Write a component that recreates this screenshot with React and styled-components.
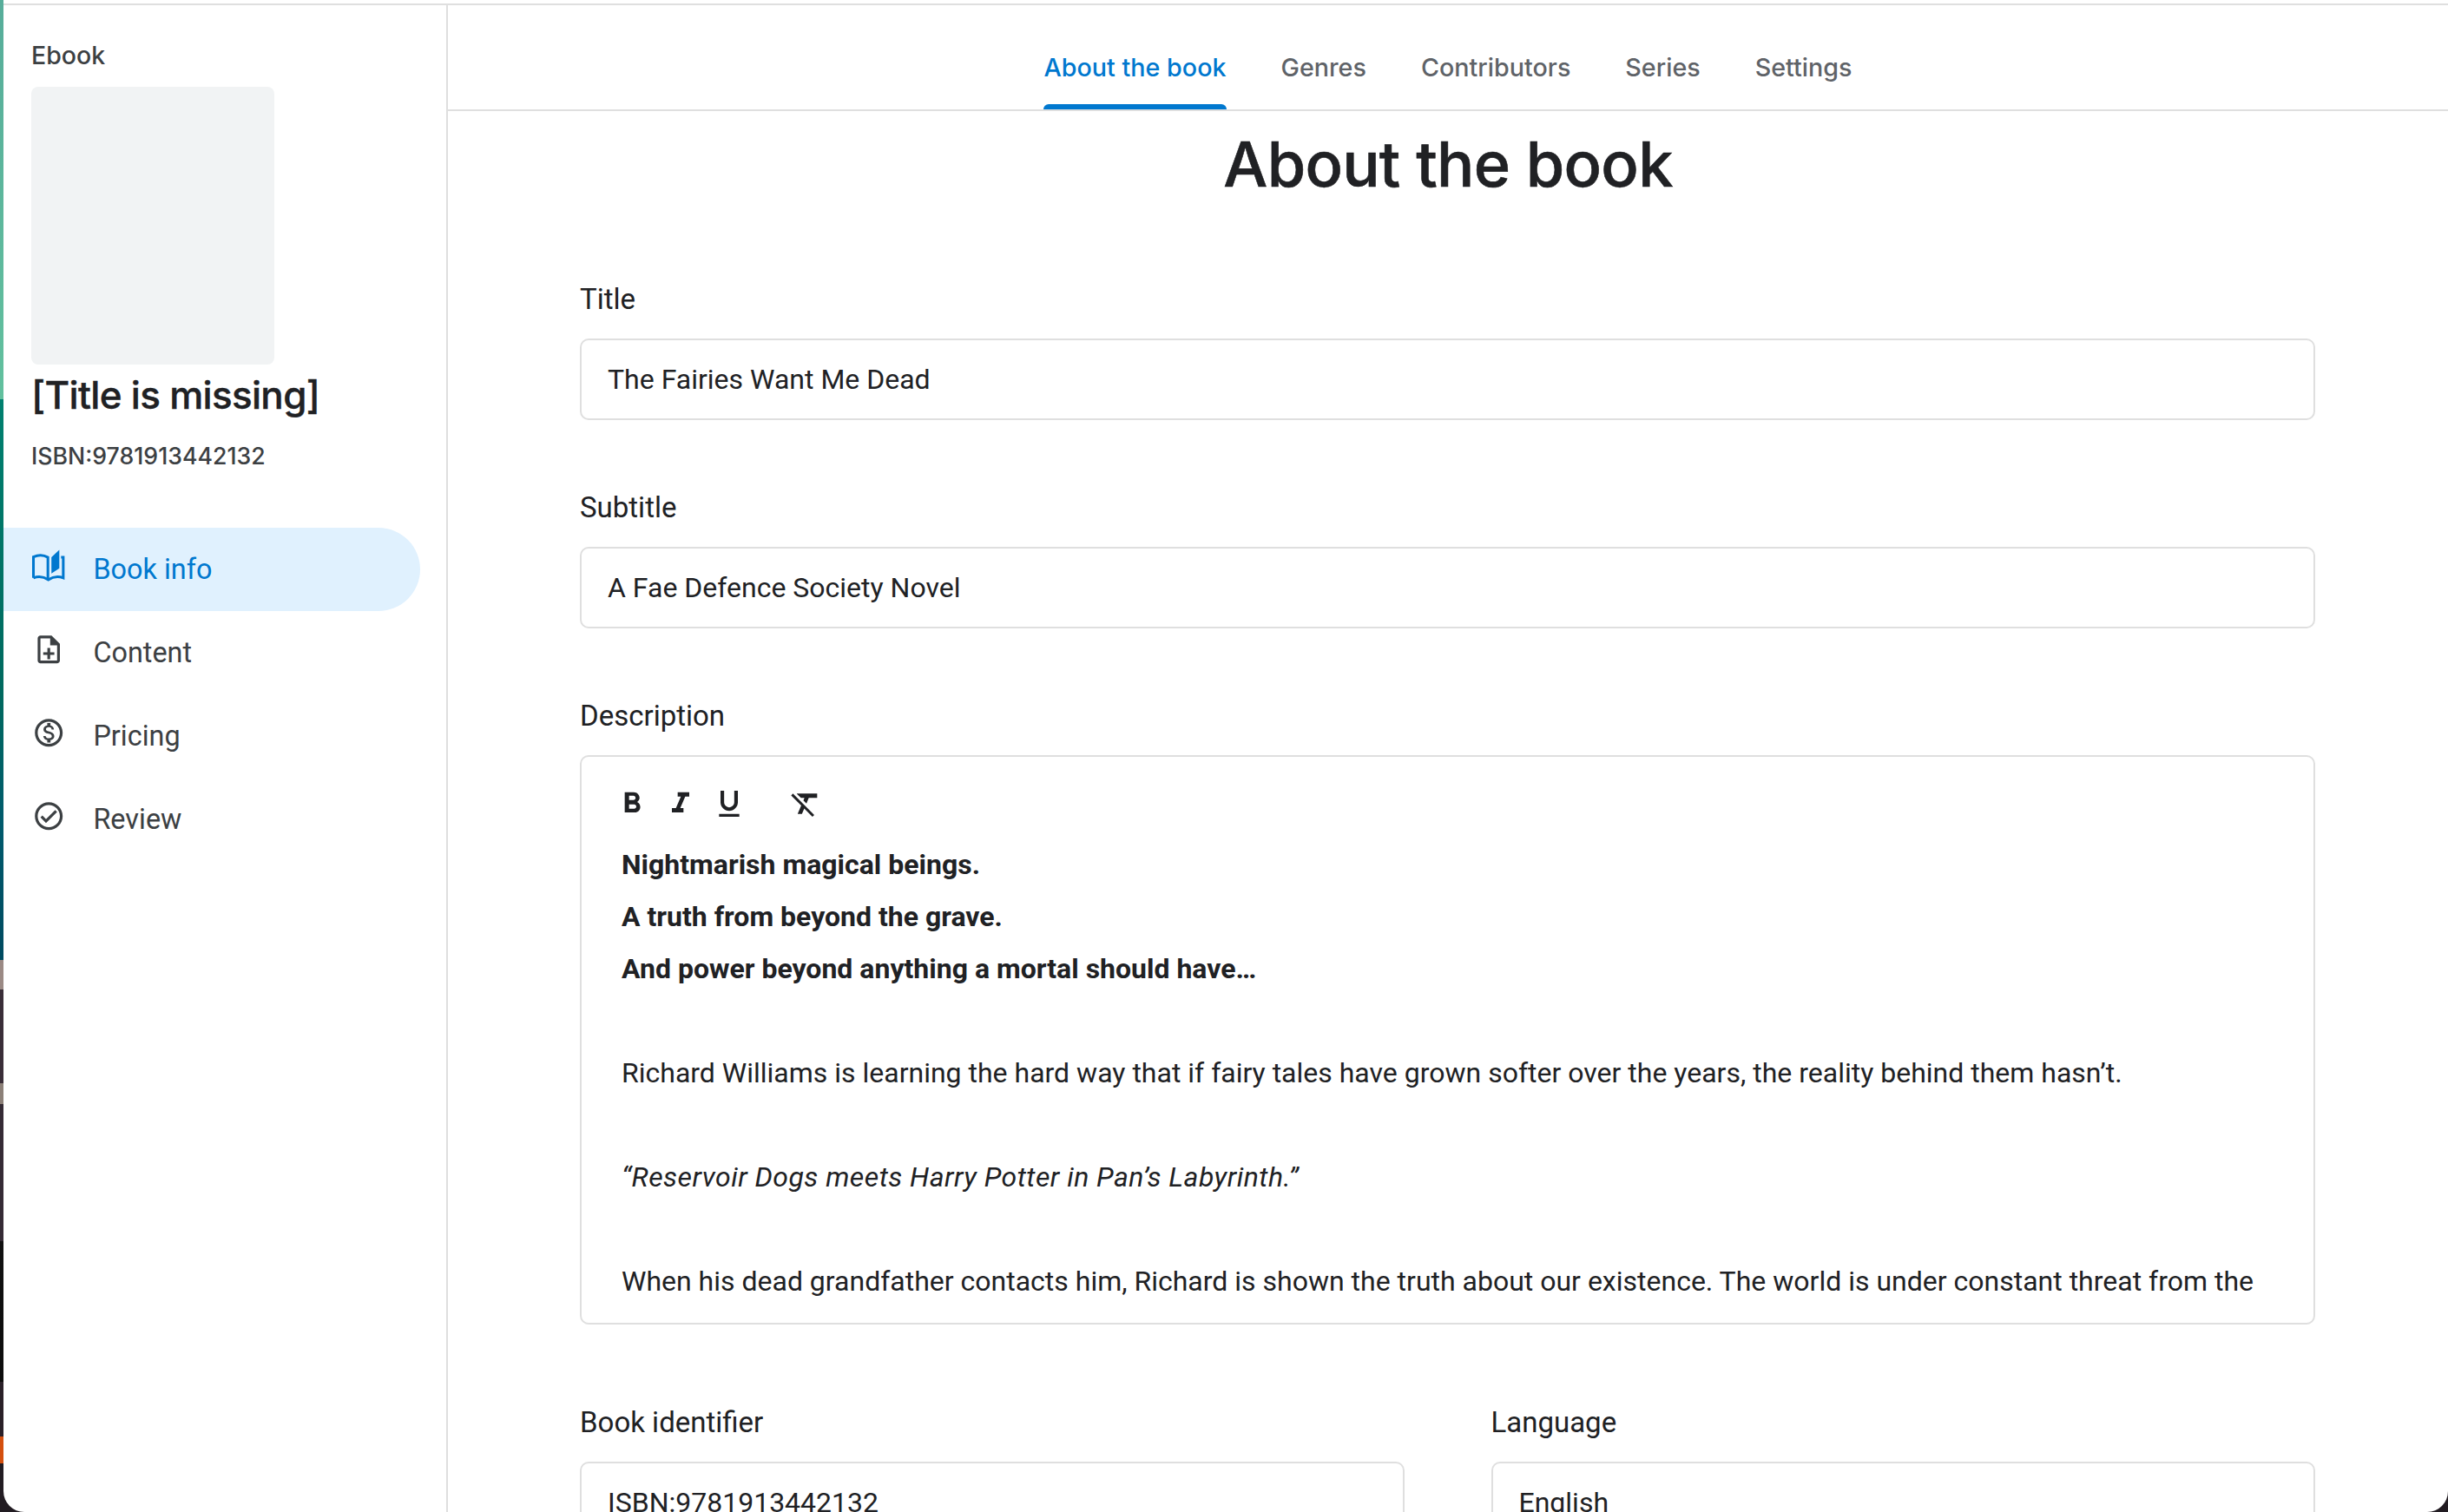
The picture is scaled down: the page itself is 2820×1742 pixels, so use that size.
import styled, { createGlobalStyle } from "styled-components";

const GlobalStyle = createGlobalStyle`
  html, body {
    margin: 0;
    height: 100%;
    overflow: hidden;
  }
  body {
    background: linear-gradient(
      180deg,
      #57ad9a 0,
      #62c09e 460px,
      #00806f 460px,
      #00695f 800px,
      #005a6c 950px,
      #004a60 1106px,
      #9b8a85 1106px,
      #9b8a85 1140px,
      #3a2e38 1140px,
      #3a2e38 1248px,
      #8c8078 1248px,
      #8c8078 1272px,
      #352b35 1272px,
      #352b35 1430px,
      #111111 1430px,
      #0c0c0c 1592px,
      #2a2028 1592px,
      #2a2028 1655px,
      #d4500f 1655px,
      #d4500f 1686px,
      #221c22 1686px
    );
  }
`;

const Window = styled.div`
  margin-left: 4px;
  height: 1742px;
  box-sizing: border-box;
  padding-top: 4px;
  background: #fff;
  border-radius: 0 0 24px 24px;
  overflow: hidden;
`;

const Frame = styled.div`
  height: 100%;
  box-sizing: border-box;
  display: flex;
  border-top: 2px solid #dfdfdf;
`;

const Sidebar = styled.aside`
  flex: 0 0 512px;
  box-sizing: border-box;
  border-right: 2px solid #dfdfdf;
  padding-top: 40px;
`;

const SideHead = styled.div`
  padding-left: 32px;
`;

const Kind = styled.div`
  font: 500 28.5px/36px "Inter", sans-serif;
  color: #3c4043;
  height: 54px;
`;

const Cover = styled.div`
  width: 280px;
  height: 320px;
  background: #f1f3f4;
  border-radius: 8px;
`;

const BookTitle = styled.div`
  font: 500 44px/56px "Inter", sans-serif;
  color: #202124;
  margin-top: 7px;
  letter-spacing: -0.7px;
  -webkit-text-stroke: 0.4px #202124;
`;

const Isbn = styled.div`
  font: 500 26.7px/36px "Inter", sans-serif;
  color: #3c4043;
  margin-top: 24px;
`;

const Nav = styled.nav`
  margin-top: 65px;
  display: flex;
  flex-direction: column;
`;

const NavItem = styled.div`
  width: 480px;
  height: 96px;
  box-sizing: border-box;
  padding-left: 33px;
  display: flex;
  align-items: center;
  gap: 32px;
  border-radius: 0 48px 48px 0;
  font: 400 32.4px/40px "Roboto", sans-serif;
  background: ${(p) => (p.$active ? "#e0f1fe" : "transparent")};
  color: ${(p) => (p.$active ? "#0078cf" : "#3c4043")};

  svg {
    flex: none;
    margin-top: -8px;
  }
`;

const Main = styled.main`
  flex: 1;
  min-width: 0;
  display: flex;
  flex-direction: column;
`;

const Tabs = styled.div`
  height: 122px;
  flex: none;
  box-sizing: border-box;
  border-bottom: 2px solid #dfdfdf;
  display: flex;
  justify-content: center;
  gap: 63px;
`;

const Tab = styled.div`
  position: relative;
  font: 500 28.7px/36px "Inter", sans-serif;
  padding-top: 54px;
  color: ${(p) => (p.$active ? "#0078cf" : "#5f6368")};

  ${(p) =>
    p.$active &&
    `&::after {
      content: "";
      position: absolute;
      left: 0;
      right: 0;
      bottom: 0;
      height: 6px;
      background: #0078cf;
      border-radius: 6px 6px 0 0;
    }`}
`;

const Heading = styled.h1`
  margin: 13px 0 0;
  text-align: center;
  font: 500 72px/96px "Inter", sans-serif;
  letter-spacing: -0.7px;
  -webkit-text-stroke: 0.6px #202124;
  color: #202124;
`;

const Form = styled.div`
  padding: 87px 153px 0 152px;
  display: flex;
  flex-direction: column;
`;

const Field = styled.div`
  margin-bottom: ${(p) => (p.$last ? "92px" : "80px")};
  min-width: 0;
`;

const Label = styled.div`
  font: 400 33px/42px "Roboto", sans-serif;
  color: #202124;
  margin-bottom: 24px;
`;

const Input = styled.div`
  height: 94px;
  box-sizing: border-box;
  border: 2px solid #dfdfdf;
  border-radius: 10px;
  padding: 0 30px;
  display: flex;
  align-items: center;
  font: 400 32px/40px "Roboto", sans-serif;
  color: #202124;
`;

const Editor = styled.div`
  height: 656px;
  box-sizing: border-box;
  border: 2px solid #dfdfdf;
  border-radius: 10px;
  overflow: hidden;
  padding: 0 46px;
`;

const Toolbar = styled.div`
  display: flex;
  align-items: center;
  margin-left: -8px;
  height: 72px;
  padding-top: 18px;
`;

const ToolButton = styled.div`
  width: 56px;
  height: 40px;
  flex: none;
  margin-right: ${(p) => (p.$group ? "32px" : "0")};
  color: #202124;
`;

const Body = styled.div`
  font: 400 32px/60px "Roboto", sans-serif;
  color: #202124;
  margin-top: 4px;
`;

const Line = styled.div`
  min-height: 60px;
  white-space: nowrap;
  font-weight: ${(p) => (p.$bold ? 700 : 400)};
  font-style: ${(p) => (p.$italic ? "italic" : "normal")};
  letter-spacing: ${(p) => (p.$italic ? "0.46px" : "normal")};
`;

const Row = styled.div`
  display: grid;
  grid-template-columns: 1fr 1fr;
  gap: 100px;
`;

const Glyph = ({ d, size = 38.4 }) => (
  <svg width={size} height={size} viewBox="0 0 24 24" fill="currentColor">
    <path d={d} />
  </svg>
);

const BookIcon = () => (
  <svg width="38.4" height="38.4" viewBox="0 0 38 38">
    <path
      d="M1.5 32.5V8.5C7 6 13 6 18 9V34.5"
      fill="none"
      stroke="currentColor"
      strokeWidth="3"
    />
    <path
      d="M1.5 32.5C7 30.5 13 31 18.5 34.5C24 31 30 30.5 35.5 32.5V9H33"
      fill="none"
      stroke="currentColor"
      strokeWidth="3"
    />
    <path d="M22 9L31 .5V21.5L22 27.5Z" fill="currentColor" />
  </svg>
);

const icons = {
  note: "M13 11h-2v3H8v2h3v3h2v-3h3v-2h-3zm1-9H6c-1.1 0-2 .9-2 2v16c0 1.1.89 2 1.99 2H18c1.1 0 2-.9 2-2V8l-6-6zm4 18H6V4h7v5h5v11z",
  paid: "M12 2C6.48 2 2 6.48 2 12s4.48 10 10 10 10-4.48 10-10S17.52 2 12 2zm0 18c-4.41 0-8-3.59-8-8s3.59-8 8-8 8 3.59 8 8-3.59 8-8 8zm.31-8.86c-1.77-.45-2.34-.94-2.34-1.67 0-.84.79-1.43 2.1-1.43 1.38 0 1.9.66 1.94 1.64h1.71c-.05-1.34-.87-2.57-2.49-2.97V5H10.9v1.69c-1.51.32-2.72 1.3-2.72 2.81 0 1.79 1.49 2.69 3.66 3.21 1.95.46 2.34 1.15 2.34 1.87 0 .53-.39 1.39-2.1 1.39-1.6 0-2.23-.72-2.32-1.64H8.04c.1 1.7 1.36 2.66 2.86 2.97V19h2.34v-1.67c1.52-.29 2.72-1.16 2.73-2.77-.01-2.2-1.9-2.96-3.66-3.42z",
  check: "M12 2C6.48 2 2 6.48 2 12s4.48 10 10 10 10-4.48 10-10S17.52 2 12 2zm0 18c-4.41 0-8-3.59-8-8s3.59-8 8-8 8 3.59 8 8-3.59 8-8 8zm4.59-12.42L10 14.17l-2.59-2.58L6 13l4 4 8-8z",
  bold: "M15.6 10.79c.97-.67 1.65-1.77 1.65-2.79 0-2.26-1.75-4-4-4H7v14h7.04c2.09 0 3.71-1.7 3.71-3.79 0-1.52-.86-2.82-2.15-3.42zM10 6.5h3c.83 0 1.5.67 1.5 1.5s-.67 1.5-1.5 1.5h-3v-3zm3.5 9H10v-3h3.5c.83 0 1.5.67 1.5 1.5s-.67 1.5-1.5 1.5z",
  italic: "M10 4v3h2.21l-3.42 8H6v3h8v-3h-2.21l3.42-8H18V4z",
  underline: "M12 17c3.31 0 6-2.69 6-6V3h-2.5v8c0 1.93-1.57 3.5-3.5 3.5S8.5 12.93 8.5 11V3H6v8c0 3.31 2.69 6 6 6zm-7 2v2h14v-2H5z",
  clear: "M3.27 5L2 6.27l6.97 6.97L6.5 19h3l1.57-3.66L16.73 21 18 19.73 3.55 5.27 3.27 5zM6 5v.18L8.82 8h2.4l-.72 1.68 2.1 2.1L14.21 8H20V5H6z",
};

const tabs = ["About the book", "Genres", "Contributors", "Series", "Settings"];

const App = () => (
  <>
    <GlobalStyle />
    <Window>
      <Frame>
        <Sidebar>
          <SideHead>
            <Kind>Ebook</Kind>
            <Cover />
            <BookTitle>[Title is missing]</BookTitle>
            <Isbn>ISBN:9781913442132</Isbn>
          </SideHead>
          <Nav>
            <NavItem $active>
              <BookIcon />
              Book info
            </NavItem>
            <NavItem>
              <Glyph d={icons.note} />
              Content
            </NavItem>
            <NavItem>
              <Glyph d={icons.paid} />
              Pricing
            </NavItem>
            <NavItem>
              <Glyph d={icons.check} />
              Review
            </NavItem>
          </Nav>
        </Sidebar>
        <Main>
          <Tabs>
            {tabs.map((t, i) => (
              <Tab key={t} $active={i === 0}>
                {t}
              </Tab>
            ))}
          </Tabs>
          <Heading>About the book</Heading>
          <Form>
            <Field>
              <Label>Title</Label>
              <Input>The Fairies Want Me Dead</Input>
            </Field>
            <Field>
              <Label>Subtitle</Label>
              <Input>A Fae Defence Society Novel</Input>
            </Field>
            <Field $last>
              <Label>Description</Label>
              <Editor>
                <Toolbar>
                  <ToolButton><Glyph d={icons.bold} size={40} /></ToolButton>
                  <ToolButton><Glyph d={icons.italic} size={40} /></ToolButton>
                  <ToolButton $group><Glyph d={icons.underline} size={40} /></ToolButton>
                  <ToolButton><Glyph d={icons.clear} size={40} /></ToolButton>
                </Toolbar>
                <Body>
                  <Line $bold>Nightmarish magical beings.</Line>
                  <Line $bold>A truth from beyond the grave.</Line>
                  <Line $bold>And power beyond anything a mortal should have…</Line>
                  <Line />
                  <Line>
                    Richard Williams is learning the hard way that if fairy tales have grown softer over the years, the reality behind them hasn’t.
                  </Line>
                  <Line />
                  <Line $italic>“Reservoir Dogs meets Harry Potter in Pan’s Labyrinth.”</Line>
                  <Line />
                  <Line>
                    When his dead grandfather contacts him, Richard is shown the truth about our existence. The world is under constant threat from the
                  </Line>
                </Body>
              </Editor>
            </Field>
            <Row>
              <Field>
                <Label>Book identifier</Label>
                <Input>ISBN:9781913442132</Input>
              </Field>
              <Field>
                <Label>Language</Label>
                <Input>English</Input>
              </Field>
            </Row>
          </Form>
        </Main>
      </Frame>
    </Window>
  </>
);

export default App;
